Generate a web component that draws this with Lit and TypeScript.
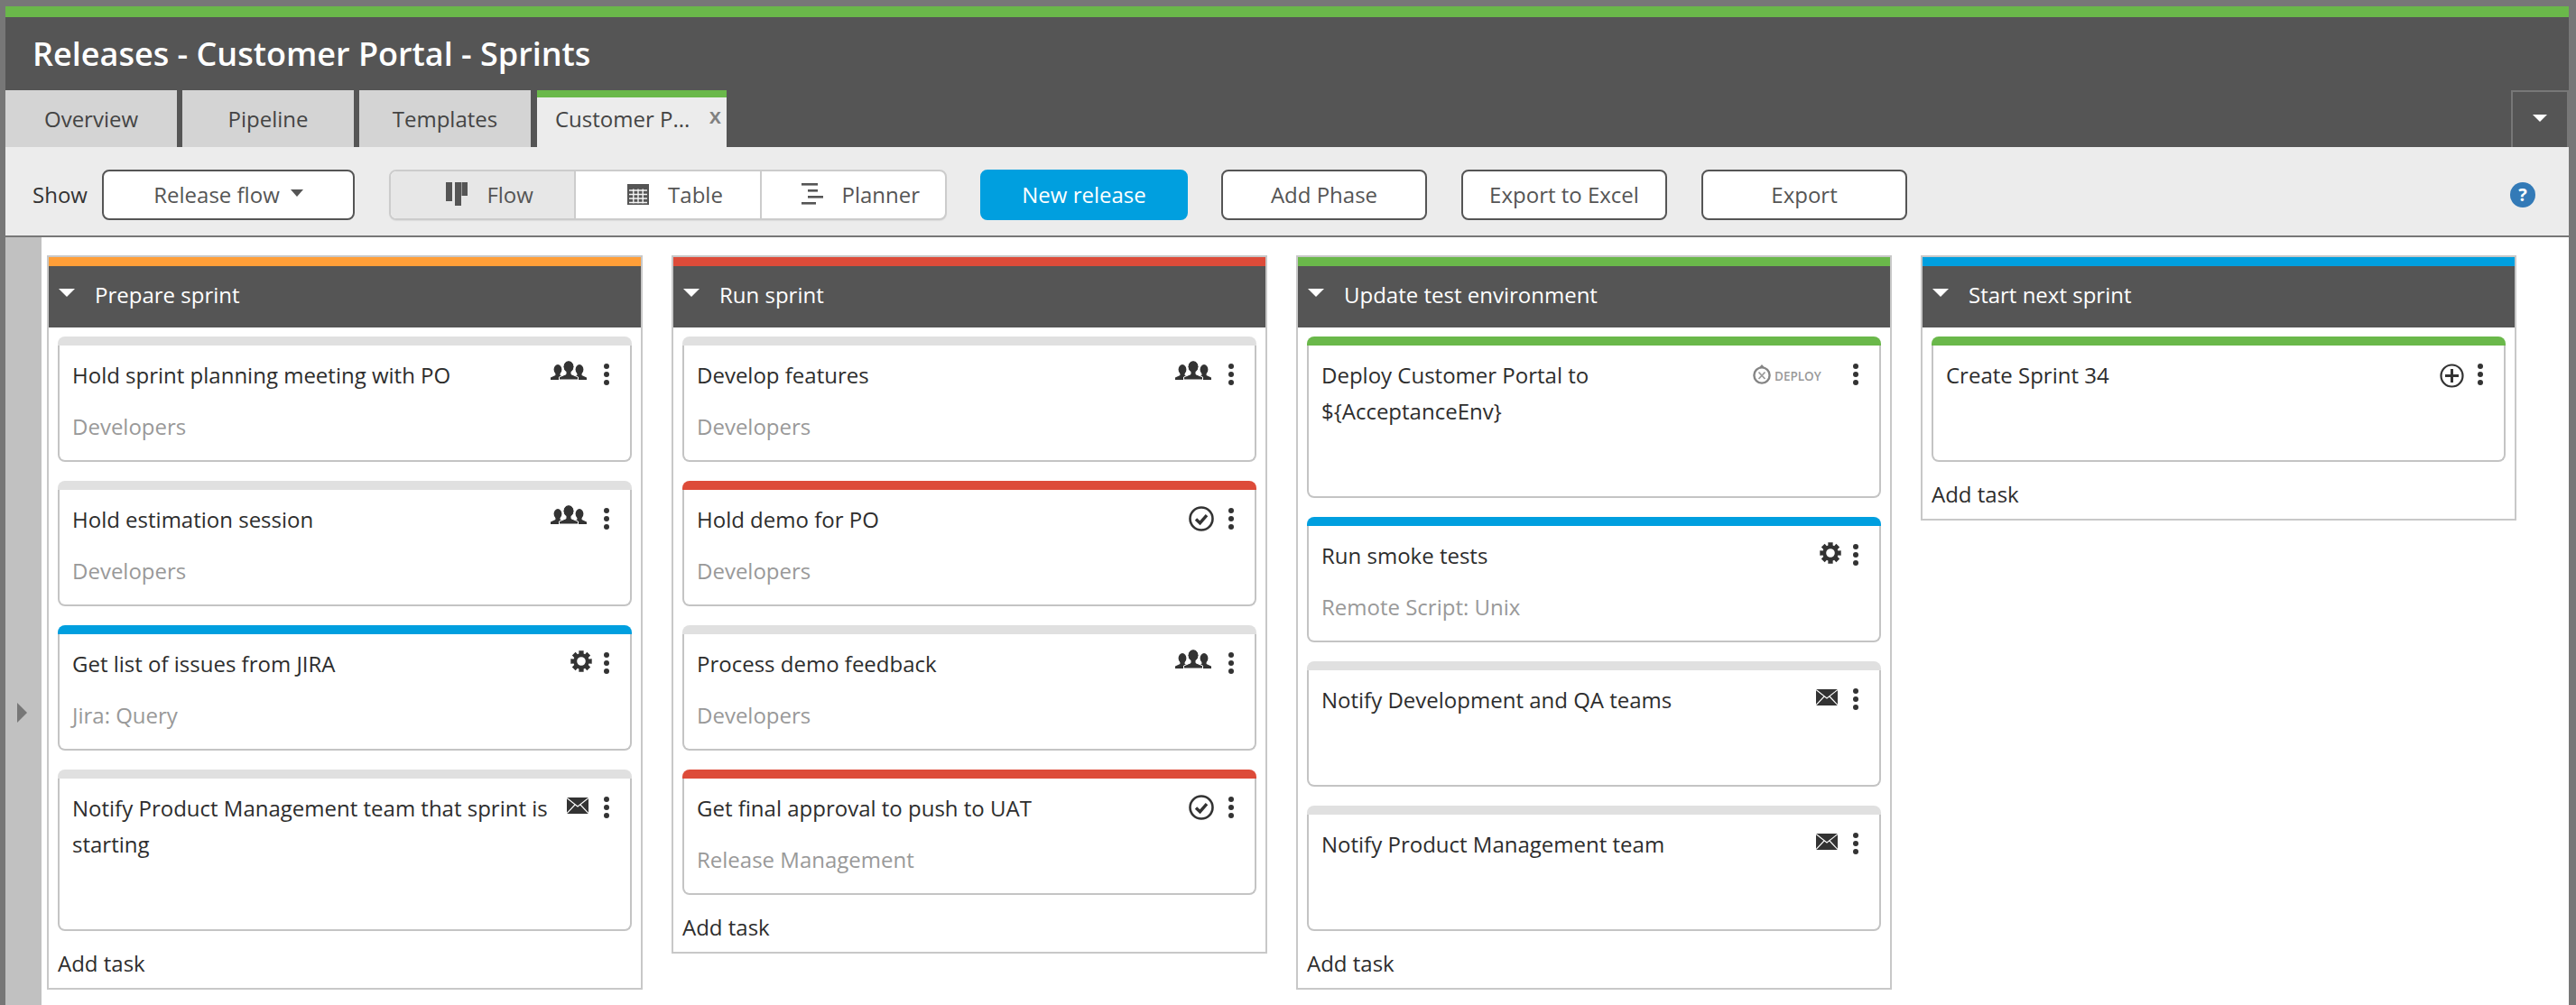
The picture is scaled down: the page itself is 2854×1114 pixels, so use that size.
import { LitElement, html, css } from "lit";
import { customElement } from "lit/decorators.js";

type Icon = "people" | "check" | "gear" | "mail" | "deploy" | "plus";
interface Task { title: string; sub?: string; color?: string; icon: Icon; tall?: boolean; }
interface Phase { name: string; color: string; tasks: Task[]; }

const BLUE = "#009fdf", RED = "#dd4b39", GREEN = "#6ab84a", ORANGE = "#ff9e38";

const phases: Phase[] = [
  { name: "Prepare sprint", color: ORANGE, tasks: [
    { title: "Hold sprint planning meeting with PO", sub: "Developers", icon: "people" },
    { title: "Hold estimation session", sub: "Developers", icon: "people" },
    { title: "Get list of issues from JIRA", sub: "Jira: Query", icon: "gear", color: BLUE },
    { title: "Notify Product Management team that sprint is starting", icon: "mail", tall: true },
  ]},
  { name: "Run sprint", color: RED, tasks: [
    { title: "Develop features", sub: "Developers", icon: "people" },
    { title: "Hold demo for PO", sub: "Developers", icon: "check", color: RED },
    { title: "Process demo feedback", sub: "Developers", icon: "people" },
    { title: "Get final approval to push to UAT", sub: "Release Management", icon: "check", color: RED },
  ]},
  { name: "Update test environment", color: GREEN, tasks: [
    { title: "Deploy Customer Portal to ${AcceptanceEnv}", icon: "deploy", color: GREEN, tall: true },
    { title: "Run smoke tests", sub: "Remote Script: Unix", icon: "gear", color: BLUE },
    { title: "Notify Development and QA teams", icon: "mail" },
    { title: "Notify Product Management team", icon: "mail" },
  ]},
  { name: "Start next sprint", color: BLUE, tasks: [
    { title: "Create Sprint 34", icon: "plus", color: GREEN },
  ]},
];

const gearPath = (() => {
  const c = 12, out = 12, inn = 8.8, hw = 0.3;
  let d = "";
  for (let i = 0; i < 8; i++) {
    const a = (i * Math.PI) / 4;
    const pts = [[a - hw, inn], [a - hw * 0.75, out], [a + hw * 0.75, out], [a + hw, inn]];
    pts.forEach(([t, r], j) => {
      const x = (c + r * Math.sin(t)).toFixed(2), y = (c - r * Math.cos(t)).toFixed(2);
      d += (i === 0 && j === 0 ? "M" : "L") + x + " " + y;
    });
  }
  return d + "Z M12 7.2a4.8 4.8 0 1 0 0 9.6a4.8 4.8 0 1 0 0-9.6Z";
})();

@customElement("task-icon")
class TaskIcon extends LitElement {
  static properties = { name: {} };
  name: Icon = "people";
  static styles = css`
    :host { display: block; line-height: 0; color: #333; }
    svg { display: block; }
    .logo { display: flex; align-items: center; gap: 3px; width: 76px; height: 22px; }
    .logo svg { flex: none; }
    .logo span { font-size: 13.5px; line-height: 18px; font-weight: 600; color: #999; white-space: nowrap; padding-top: 3px; }
  `;
  render() {
    switch (this.name) {
      case "people":
        return html`<svg width="40" height="21" viewBox="0 0 40 21" fill="#333">
          <ellipse cx="8" cy="9.5" rx="4.4" ry="5.4"/>
          <path d="M0 21v-2.4l5.4-2.6v-3h5.2v3l5 2.4v2.6z"/>
          <ellipse cx="32" cy="9.5" rx="4.4" ry="5.4"/>
          <path d="M40 21v-2.4l-5.4-2.6v-3h-5.2v3l-5 2.4v2.6z"/>
          <ellipse cx="20" cy="6.5" rx="5.8" ry="6.5" stroke="#fff" stroke-width="1"/>
          <path d="M9.5 21v-3l7.5-3.2v-5h6v5l7.5 3.2v3z" stroke="#fff" stroke-width="1"/>
          <ellipse cx="20" cy="6.5" rx="5.4" ry="6.2"/>
        </svg>`;
      case "check":
        return html`<svg width="28" height="28" viewBox="0 0 28 28" fill="none" stroke="#333">
          <circle cx="14" cy="14" r="12.5" stroke-width="2.6"/>
          <path d="M8 14.5l4.5 4.2 7.5-8.5" stroke-width="3.4"/>
        </svg>`;
      case "gear":
        return html`<svg width="24" height="24" viewBox="0 0 24 24" fill="#333" fill-rule="evenodd"><path d="${gearPath}"/></svg>`;
      case "mail":
        return html`<svg width="24" height="18" viewBox="0 0 24 18">
          <rect width="24" height="18" fill="#333"/>
          <path d="M0 0.5l12 9.5 12-9.5M0 17.5l9-9.5M24 17.5l-9-9.5" fill="none" stroke="#fff" stroke-width="1.1"/>
        </svg>`;
      case "plus":
        return html`<svg width="27" height="27" viewBox="0 0 27 27" fill="none" stroke="#333">
          <circle cx="13.5" cy="13.5" r="12" stroke-width="2.2"/>
          <path d="M13.5 6v15M6 13.5h15" stroke-width="3"/>
        </svg>`;
      case "deploy":
        return html`<div class="logo">
          <svg width="21" height="22" viewBox="0 0 21 22">
            <circle cx="10" cy="12" r="8.6" fill="none" stroke="#858585" stroke-width="2.4"/>
            <path d="M10 0l3.4 3.8h-6.8z" fill="#858585"/>
            <path d="M6.5 8.5l7 7.5M13.5 8.5l-7 7.5" stroke="#9a9a9a" stroke-width="1.8"/>
          </svg>
          <span>DEPLOY</span>
        </div>`;
    }
  }
}

@customElement("task-card")
class TaskCard extends LitElement {
  static properties = { task: { attribute: false } };
  task!: Task;
  static styles = css`
    :host { display: block; }
    .band { height: 10px; border-radius: 8px 8px 0 0; background: #e0e0e0; }
    .body {
      box-sizing: border-box; height: 129px; background: #fff; padding: 13px 16px 0 14px;
      border: 2px solid #c4c4c4; border-top: 0; border-radius: 0 0 8px 8px;
    }
    .tall .body { height: 169px; }
    .head { display: flex; align-items: flex-start; }
    .title { flex: 1; min-width: 0; font-size: 24px; line-height: 40px; color: #2d2d2d; }
    .icons { display: flex; align-items: flex-start; justify-content: flex-end; width: 70px; flex: none; padding-top: 5px; }
    .wide { width: 152px; }
    .i-people { margin: -1px 19px 0 0; }
    .i-mail { margin: 3px 17px 0 0; }
    .i-gear { margin: 0 13px 0 0; }
    .i-check { margin: 0 16px 0 0; }
    .i-plus { margin: 2px 15px 0 0; }
    .i-deploy { margin: 3px 35px 0 0; }
    .dots { display: flex; flex-direction: column; gap: 2.6px; padding-top: 2px; width: 6px; margin-right: 7px; flex: none; }
    .dots i { display: block; width: 6.4px; height: 6.4px; border-radius: 50%; background: #333; }
    .sub { font-size: 24px; line-height: 36px; color: #999; margin-top: 19px; }
  `;
  render() {
    const t = this.task;
    return html`<div class=${t.tall ? "tall" : ""}>
      <div class="band" style=${t.color ? `background:${t.color}` : ""}></div>
      <div class="body">
        <div class="head">
          <div class="title">${t.title}</div>
          <div class="icons ${t.icon === "deploy" ? "wide" : ""}">
            <task-icon class="i-${t.icon}" .name=${t.icon}></task-icon>
            <div class="dots"><i></i><i></i><i></i></div>
          </div>
        </div>
        ${t.sub ? html`<div class="sub">${t.sub}</div>` : ""}
      </div>
    </div>`;
  }
}

@customElement("app-root")
export class AppRoot extends LitElement {
  static styles = css`
    :host {
      display: block; width: 2854px; height: 1114px; overflow: hidden; background: #777;
      font-family: "Open Sans", sans-serif; box-sizing: border-box; padding: 7px 8px 0 6px;
    }
    * { box-sizing: border-box; }
    .frame { height: 100%; display: flex; flex-direction: column; background: #fff; }
    .top { height: 156px; flex: none; background: #555; border-top: 12px solid #6ab84a; display: flex; flex-direction: column; }
    h1 { margin: 0; height: 81px; padding: 7px 0 0 30px; font-size: 36px; line-height: 68px; font-weight: 600; color: #fff; }
    .tabs { flex: 1; display: flex; gap: 6px; align-items: stretch; }
    .tab { width: 190px; background: #d4d4d4; color: #444; font-size: 24px; display: flex; align-items: center; justify-content: center; padding-bottom: 1px; }
    .tab.active { margin-left: 1px; width: 210px; background: #ececec; border-top: 8px solid #6ab84a; justify-content: flex-start; padding: 0 0 9px 20px; position: relative; }
    .tab .x { position: absolute; right: 6px; top: 5px; font-size: 24px; font-weight: 600; line-height: 30px; color: #808080; }
    .more { margin-left: auto; width: 64px; border: 2px solid #777; border-bottom: 0; display: flex; align-items: center; justify-content: center; }
    .more::after { content: ""; border-left: 8px solid transparent; border-right: 8px solid transparent; border-top: 8px solid #fff; margin-top: -3px; }
    .bar { height: 100px; flex: none; background: #ececec; border-bottom: 2px solid #777; display: flex; align-items: center; padding: 7px 37px 0 30px; }
    .show { font-size: 24px; color: #333; width: 78px; }
    .btn { height: 56px; width: 228px; flex: none; border: 2px solid #555; border-radius: 8px; background: #fff; color: #555; font-size: 24px; display: flex; align-items: center; justify-content: center; gap: 12px; padding-bottom: 1px; }
    .btn.sel { width: 280px; margin-left: -1px; }
    .btn.sel::after { content: ""; border-left: 7px solid transparent; border-right: 7px solid transparent; border-top: 8px solid #555; margin-top: -3px; }
    .seg { display: flex; width: 618px; height: 56px; margin: 0 37px 0 38px; border: 2px solid #ccc; border-radius: 8px; background: #fff; overflow: hidden; box-shadow: 0 1px 1px #ddd; flex: none; }
    .seg div { flex: 1; display: flex; align-items: center; justify-content: center; gap: 21px; font-size: 24px; color: #555; border-left: 2px solid #ccc; padding: 0 0 1px 16px; }
    .seg div:first-child { border-left: 0; background: #e7e7e7; }
    .seg svg { flex: none; }
    .new { width: 230px; background: #009fdf; border-color: #009fdf; color: #fff; margin-right: 37px; }
    .mid { margin-right: 38px; }
    .help { margin-left: auto; }
    .main { flex: 1; min-height: 0; display: flex; }
    .side { width: 40px; flex: none; background: #c1c1c1; display: flex; align-items: center; justify-content: center; padding: 202px 3px 0 0; }
    .side::after { content: ""; border-top: 11px solid transparent; border-bottom: 11px solid transparent; border-left: 11px solid #777; }
    .board { flex: 1; display: flex; align-items: flex-start; gap: 32px; padding: 20px 0 0 6px; }
    .col { width: 660px; flex: none; border: 2px solid #c8c8c8; }
    .stripe { height: 10px; }
    .phead { height: 68px; background: #555; color: #fff; display: flex; align-items: center; font-size: 24px; padding: 0 0 6px 11px; }
    .phead::before { content: ""; border-left: 9px solid transparent; border-right: 9px solid transparent; border-top: 9px solid #fff; margin: -3px 22px 0 0; }
    .cards { display: flex; flex-direction: column; gap: 21px; padding: 10px 10px 0; }
    .add { height: 63px; font-size: 24px; color: #2d2d2d; padding: 18px 0 0 10px; line-height: 36px; }
  `;
  render() {
    return html`<div class="frame">
      <div class="top">
        <h1>Releases - Customer Portal - Sprints</h1>
        <div class="tabs">
          <div class="tab">Overview</div>
          <div class="tab">Pipeline</div>
          <div class="tab">Templates</div>
          <div class="tab active">Customer P...<span class="x">x</span></div>
          <div class="more"></div>
        </div>
      </div>
      <div class="bar">
        <span class="show">Show</span>
        <div class="btn sel">Release flow</div>
        <div class="seg">
          <div>
            <svg width="24" height="26" viewBox="0 0 24 26" fill="#555"><rect x="0" y="0" width="7" height="21"/><rect x="10" y="0" width="7" height="26"/><rect x="17.5" y="0" width="6.5" height="15"/></svg>
            Flow
          </div>
          <div>
            <svg width="24" height="23" viewBox="0 0 24 23"><rect width="24" height="23" fill="#555"/><path d="M2 7h20M2 11.5h20M2 16h20M2 20.5h20M6.8 5.5v16M12 5.5v16M17.2 5.5v16" stroke="#f4f4f4" stroke-width="1.4" fill="none"/></svg>
            Table
          </div>
          <div>
            <svg width="24" height="24" viewBox="0 0 24 24" fill="#555"><rect x="0" y="0" width="18" height="2.6"/><rect x="7" y="7" width="11" height="2.6"/><rect x="7" y="14" width="17" height="2.6"/><rect x="0" y="21" width="16" height="2.6"/></svg>
            Planner
          </div>
        </div>
        <div class="btn new">New release</div>
        <div class="btn mid">Add Phase</div>
        <div class="btn mid">Export to Excel</div>
        <div class="btn">Export</div>
        <svg class="help" width="28" height="28" viewBox="0 0 28 28">
          <circle cx="14" cy="14" r="14" fill="#337ab7"/>
          <text x="14" y="21" text-anchor="middle" font-family="'Open Sans',sans-serif" font-weight="700" font-size="20" fill="#fff">?</text>
        </svg>
      </div>
      <div class="main">
        <div class="side"></div>
        <div class="board">
          ${phases.map((p) => html`<section class="col">
            <div class="stripe" style="background:${p.color}"></div>
            <div class="phead">${p.name}</div>
            <div class="cards">
              ${p.tasks.map((t) => html`<task-card .task=${t}></task-card>`)}
            </div>
            <div class="add">Add task</div>
          </section>`)}
        </div>
      </div>
    </div>`;
  }
}
